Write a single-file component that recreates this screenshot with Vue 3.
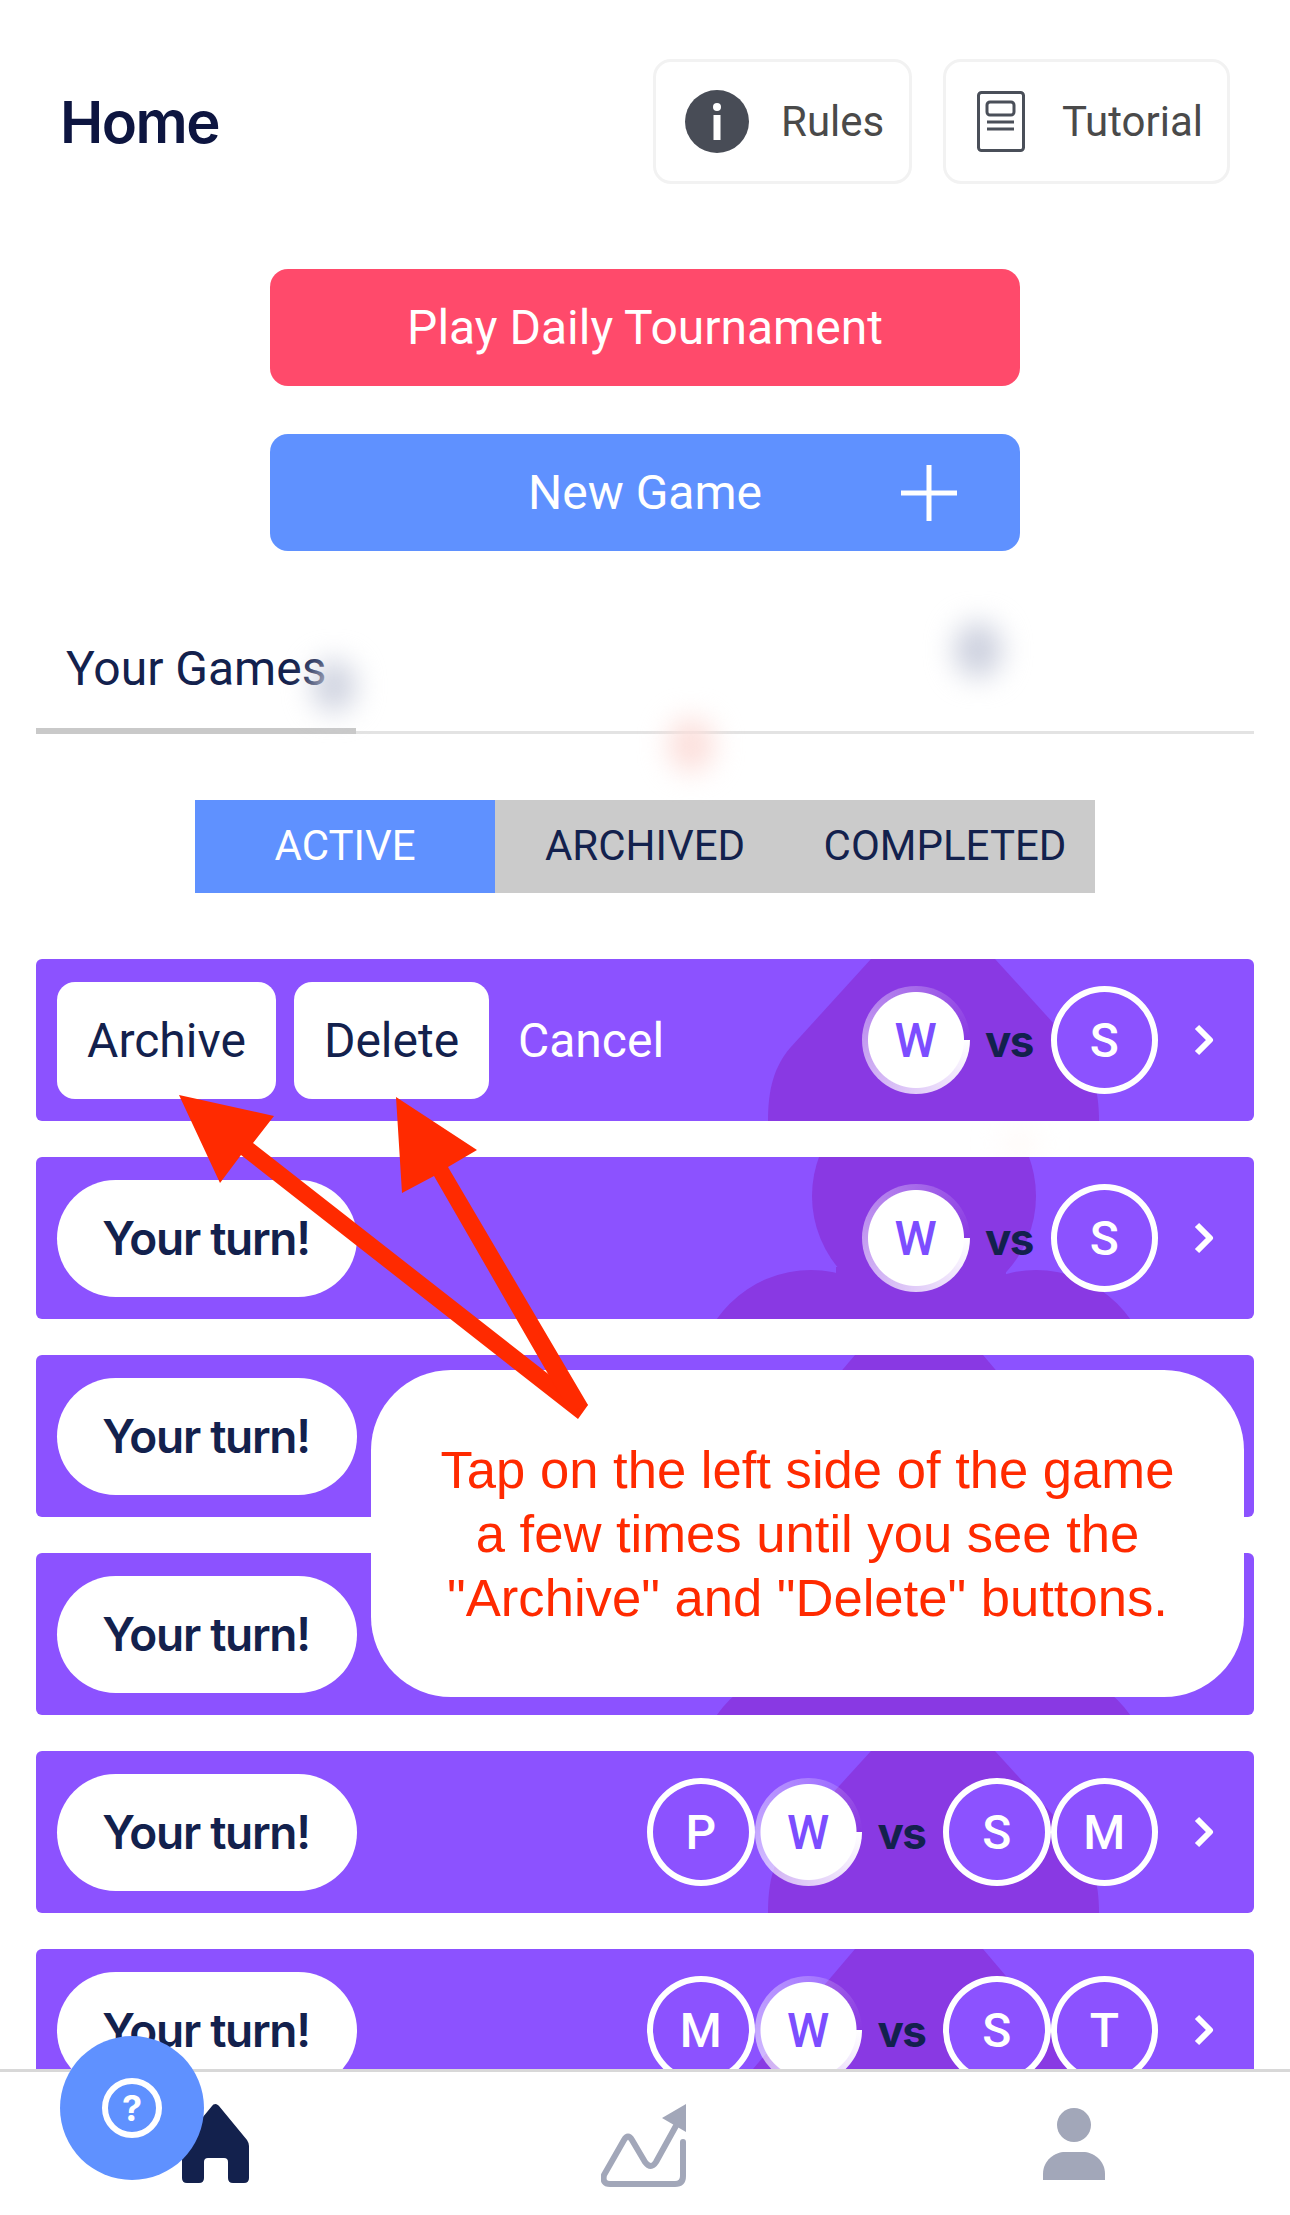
<template>
  <div class="page">
    <span v-for="s in smudges" :key="s" class="smudge" :class="s"></span>

    <main class="content">
      <header class="top">
        <h1 class="title">Home</h1>
        <div class="top-btns">
          <button class="ghost rules">
            <svg width="64" height="63" viewBox="0 0 64 63">
              <ellipse cx="32" cy="31.500" rx="32" ry="31.500" fill="#484c56" />
              <circle cx="32" cy="17" r="4" fill="#fff" />
              <rect x="28.500" y="25" width="7" height="25" fill="#fff" />
            </svg>
            <span>Rules</span>
          </button>
          <button class="ghost tutorial">
            <svg width="48" height="61" viewBox="0 0 48 61" fill="none" stroke="#4a4f59" stroke-width="3">
              <rect x="1.500" y="1.500" width="45" height="58" rx="3" />
              <rect x="10" y="11" width="27" height="13" rx="3" />
              <path d="M10 31h27M10 38h27" />
            </svg>
            <span>Tutorial</span>
          </button>
        </div>
      </header>

      <div class="actions">
        <button class="big red">Play Daily Tournament</button>
        <button class="big blue">
          New Game
          <svg class="plus" width="56" height="56" viewBox="0 0 56 56">
            <path d="M28 0v56M0 28h56" stroke="#fff" stroke-width="5" />
          </svg>
        </button>
      </div>

      <div class="tabs">
        <div class="tab">Your Games</div>
      </div>

      <div class="segments">
        <div
          v-for="f in filters"
          :key="f"
          class="segment"
          :class="{ active: f === 'ACTIVE' }"
        >
          {{ f }}
        </div>
      </div>

      <section class="games">
        <div v-for="(g, i) in games" :key="i" class="game">
          <svg class="suit" width="1218" height="162" viewBox="0 0 1218 162" fill="#8939e3">
            <path
              v-if="g.suit === 'spade'"
              d="M835 0L754 89C738 108 732 130 732 162L1063 162C1063 130 1056 108 1040 89L959 0Z"
            />
            <g v-if="g.suit === 'club'">
              <circle cx="888" cy="39" r="112" />
              <circle cx="775" cy="228" r="115" />
              <circle cx="1000" cy="228" r="115" />
              <rect x="800" y="110" width="170" height="60" />
            </g>
            <path v-if="g.suit === 'diamond'" d="M819 0L700 140L819 300H947L1066 140L947 0Z" />
          </svg>

          <div v-if="g.confirm" class="confirm">
            <button class="tile archive">Archive</button>
            <button class="tile delete">Delete</button>
            <span class="cancel">Cancel</span>
          </div>
          <div v-else class="turn">Your turn!</div>

          <template v-if="g.left">
            <div class="players">
              <span
                v-for="p in g.left"
                :key="p"
                class="chip"
                :class="{ me: p === 'W' }"
              >
                <b>{{ p }}</b>
              </span>
              <span class="vs">vs</span>
              <span v-for="p in g.right" :key="p" class="chip"><b>{{ p }}</b></span>
            </div>

            <svg class="chev" width="20" height="32" viewBox="0 0 20 32" fill="none">
              <path d="M3 3l13 13L3 29" stroke="#fff" stroke-width="6" stroke-linejoin="round" />
            </svg>
          </template>
        </div>
      </section>
    </main>

    <nav class="nav">
      <svg class="nav-home" width="67" height="79" viewBox="0 0 67 79">
        <path
          d="M33.500 0C35 0 36 1 37 2L65 36Q67 39 67 42V74Q67 79 62 79H51Q46 79 46 74V58Q46 54 42 54H26Q22 54 22 58V74Q22 79 17 79H5Q0 79 0 74V42Q0 39 2 36L30 2Q31 0 33.500 0Z"
          fill="#13214d"
        />
      </svg>
      <svg class="nav-chart" width="87" height="84" viewBox="0 0 87 84" fill="none">
        <path
          d="M82 38V72Q82 80 74 80H9Q1 80 3 71L23 36Q27 29 31 36L44 58Q50 66 55 58L76 20"
          stroke="#a2a7b9"
          stroke-width="6"
          stroke-linecap="round"
          stroke-linejoin="round"
        />
        <path d="M85 0L61 14L85 28Z" fill="#a2a7b9" />
      </svg>
      <svg class="nav-user" width="62" height="72" viewBox="0 0 62 72" fill="#a2a7b9">
        <circle cx="31" cy="17" r="17" />
        <path d="M0 72V66C0 52 12 44 22 44H40C50 44 62 52 62 66V72Z" />
      </svg>
    </nav>

    <button class="fab"><span class="fab-ring">?</span></button>

    <div class="callout">
      Tap on the left side of the game<br />
      a few times until you see the<br />
      "Archive" and "Delete" buttons.
    </div>

    <svg class="arrows" width="430" height="340" viewBox="170 1090 430 340" fill="#ff2a00">
      <path d="M179 1095L274 1116L253 1143L588 1405L578 1419L241 1155L220 1183Z" />
      <path d="M396 1097L477 1150L448 1167L588 1405L570 1412L434 1176L402 1193Z" />
    </svg>
  </div>
</template>

<script setup>
const filters = ['ACTIVE', 'ARCHIVED', 'COMPLETED']

const smudges = ['s1', 's2', 's3', 's4']

// games 3 and 4 sit under the callout, so their players never show
const games = [
  { confirm: true, suit: 'spade', left: ['W'], right: ['S'] },
  { suit: 'club', left: ['W'], right: ['S'] },
  { suit: 'diamond' },
  { suit: 'club' },
  { suit: 'spade', left: ['P', 'W'], right: ['S', 'M'] },
  { suit: 'diamond', left: ['M', 'W'], right: ['S', 'T'] },
]
</script>

<style>
html,
body {
  margin: 0;
  background: #fff;
}
</style>

<style scoped>
.page {
  position: relative;
  width: 1290px;
  height: 2215px;
  overflow: hidden;
  display: flex;
  flex-direction: column;
  background: #fff;
  font-family: Roboto, "Liberation Sans", sans-serif;
  color: #13214d;
}

button {
  font: inherit;
  border: 0;
  padding: 0;
}

.content {
  flex: 1;
  min-height: 0;
  overflow: hidden;
  padding-top: 59px;
}

.top {
  display: flex;
  justify-content: space-between;
  align-items: center;
  padding: 0 60px 0 60px;
}

.title {
  margin: 0;
  font-family: Inter, sans-serif;
  font-size: 58px;
  font-weight: 600;
  letter-spacing: -1.500px;
  color: #0d1540;
}

.top-btns {
  display: flex;
  gap: 31px;
}

.ghost {
  display: flex;
  align-items: center;
  box-sizing: border-box;
  height: 125px;
  background: #fff;
  border: 3px solid #f2f2f2;
  border-radius: 18px;
  color: #4a4a4a;
  font-size: 42px;
}

.rules {
  width: 259px;
  padding-left: 29px;
  gap: 32px;
}

.tutorial {
  width: 287px;
  padding-left: 31px;
  gap: 37px;
}

.actions {
  display: flex;
  flex-direction: column;
  align-items: center;
  gap: 48px;
  margin-top: 85px;
}

.big {
  position: relative;
  width: 750px;
  height: 117px;
  border-radius: 18px;
  color: #fff;
  font-size: 48px;
}

.red {
  background: #ff4a6b;
}

.blue {
  background: #5f91ff;
}

.plus {
  position: absolute;
  left: 631px;
  top: 31px;
}

.tabs {
  margin: 85px 36px 0;
  border-bottom: 3px solid #e3e3e3;
}

.tab {
  box-sizing: border-box;
  width: 320px;
  height: 98px;
  margin-bottom: -3px;
  padding: 3px 0 0 30px;
  border-bottom: 6px solid #c9c9c9;
  font-size: 48px;
  line-height: 60px;
}

.segments {
  display: flex;
  width: 900px;
  margin: 66px auto 0;
  background: #cbcbcb;
}

.segment {
  width: 300px;
  height: 93px;
  padding-bottom: 2px;
  box-sizing: border-box;
  display: flex;
  align-items: center;
  justify-content: center;
  font-size: 42px;
}

.segment.active {
  background: #5f91ff;
  color: #fff;
}

.games {
  display: flex;
  flex-direction: column;
  gap: 36px;
  margin: 66px 36px 0;
}

.game {
  position: relative;
  flex: none;
  height: 162px;
  display: flex;
  align-items: center;
  padding: 0 40px 0 21px;
  border-radius: 6px;
  background: #8c52ff;
  overflow: hidden;
}

.suit {
  position: absolute;
  left: 0;
  top: 0;
}

.confirm {
  position: relative;
  display: flex;
  align-items: center;
  gap: 18px;
}

.tile {
  height: 117px;
  border-radius: 18px;
  background: #fff;
  color: #13214d;
  font-size: 48px;
}

.archive {
  width: 219px;
}

.delete {
  width: 195px;
}

.cancel {
  margin-left: 11px;
  color: #fff;
  font-size: 48px;
}

.turn {
  position: relative;
  width: 300px;
  height: 117px;
  padding-right: 2px;
  box-sizing: border-box;
  display: flex;
  align-items: center;
  justify-content: center;
  border-radius: 59px;
  background: #fff;
  font-family: Inter, sans-serif;
  font-size: 46px;
  font-weight: 600;
  letter-spacing: -1.300px;
  color: #13214d;
}

.players {
  position: relative;
  display: flex;
  align-items: center;
  margin-left: auto;
}

.chip {
  box-sizing: border-box;
  width: 107.500px;
  height: 108px;
  display: flex;
  align-items: center;
  justify-content: center;
  border: 6px solid #fff;
  border-radius: 50%;
  background: #8c52ff;
  color: #fff;
  font-size: 48px;
}

.chip b {
  font-weight: 500;
}

.chip.me {
  border: 0;
  color: #7c4dff;
  background:
    radial-gradient(circle at center, #fff 47.500px, transparent 48.500px),
    conic-gradient(from 90deg, #fff, rgba(255, 255, 255, 0));
}

.vs {
  width: 81px;
  box-sizing: border-box;
  padding: 2px 2px 0 0;
  text-align: center;
  font-family: Inter, sans-serif;
  font-size: 44px;
  font-weight: 700;
  letter-spacing: -1.500px;
  color: #13214d;
}

.chev {
  position: relative;
  flex: none;
  margin-left: 36px;
}

.nav {
  position: relative;
  flex: none;
  height: 146px;
  box-sizing: border-box;
  display: flex;
  border-top: 3px solid #d8d8d8;
  background: #fff;
}

.nav svg {
  position: absolute;
}

.nav-home {
  left: 182px;
  top: 32px;
}

.nav-chart {
  left: 601px;
  top: 32px;
}

.nav-user {
  left: 1043px;
  top: 36px;
}

.fab {
  position: absolute;
  left: 60px;
  top: 2036px;
  width: 144px;
  height: 144px;
  display: flex;
  align-items: center;
  justify-content: center;
  border-radius: 50%;
  background: #5f91ff;
}

.fab-ring {
  box-sizing: border-box;
  width: 60px;
  height: 60px;
  display: flex;
  align-items: center;
  justify-content: center;
  border: 6px solid #fff;
  border-radius: 50%;
  color: #fff;
  font-family: Inter, sans-serif;
  font-size: 36px;
  font-weight: 700;
}

.callout {
  position: absolute;
  left: 371px;
  top: 1370px;
  width: 873px;
  height: 327px;
  padding-top: 1px;
  box-sizing: border-box;
  display: flex;
  align-items: center;
  justify-content: center;
  text-align: center;
  border-radius: 80px;
  background: #fff;
  color: #ff2a00;
  font-family: "Liberation Sans", Arial, sans-serif;
  font-size: 52.600px;
  line-height: 64px;
  white-space: nowrap;
}

.arrows {
  position: absolute;
  left: 170px;
  top: 1090px;
}

.smudge {
  position: absolute;
  border-radius: 50%;
  filter: blur(14px);
}

.s1 {
  left: 312px;
  top: 660px;
  width: 44px;
  height: 52px;
  background: #ced2df;
}

.s2 {
  left: 954px;
  top: 622px;
  width: 48px;
  height: 56px;
  background: #ccd0de;
}

.s3 {
  left: 668px;
  top: 718px;
  width: 46px;
  height: 54px;
  background: #fcdeda;
}

.s4 {
  left: 1000px;
  top: 1134px;
  width: 40px;
  height: 20px;
  background: #fff7f4;
}
</style>
